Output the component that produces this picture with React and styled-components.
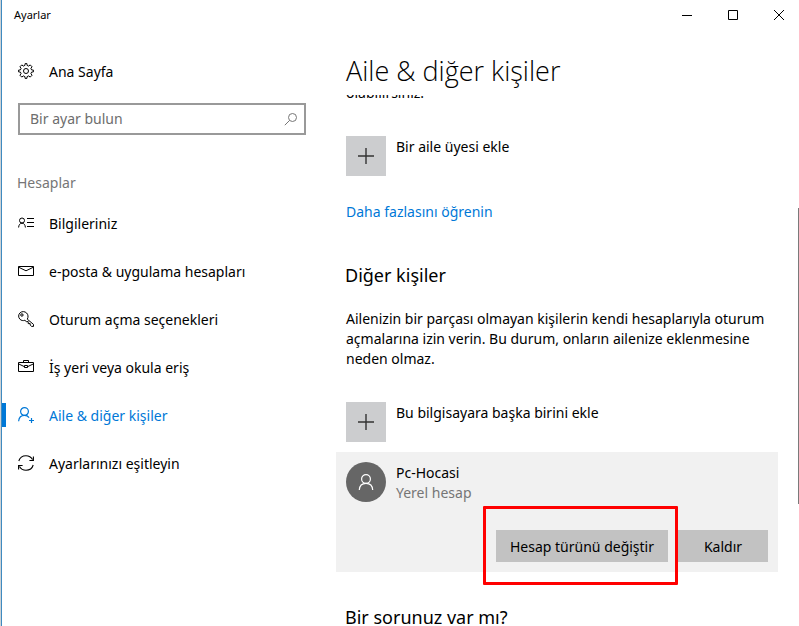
import React from "react";
import styled, { createGlobalStyle, css } from "styled-components";

const GlobalStyle = createGlobalStyle`
  * {
    box-sizing: border-box;
  }
  body {
    margin: 0;
    background: #cdd2d6;
    color: #000;
    font-family: "Noto Sans", "Open Sans", sans-serif;
    font-size: 14px;
    line-height: 20px;
  }
  button,
  input {
    font: inherit;
    color: inherit;
  }
  h1, h2, p {
    margin: 0;
    font-weight: 400;
  }
`;

const Desktop = styled.div`
  height: 100vh;
  padding-left: 1px;
  overflow: hidden;
`;

const Window = styled.div`
  display: flex;
  flex-direction: column;
  height: 100%;
  background: #fff;
  border-left: 1px solid #3f8ac0;
`;

const TitleBar = styled.header`
  display: flex;
  flex: none;
  justify-content: space-between;
  height: 30px;
  padding-left: 12px;
  font-size: 11px;
  line-height: 30px;
`;

const WindowButtons = styled.div`
  display: flex;
  margin-right: -3px;
`;

const WindowButton = styled.button`
  display: flex;
  align-items: center;
  justify-content: center;
  width: 46px;
  padding: 0;
  border: 0;
  background: none;
`;

const Body = styled.div`
  display: grid;
  grid-template-columns: 320px minmax(0, 1fr);
  flex: 1;
  min-height: 0;
`;

const Sidebar = styled.aside`
  padding-top: 17px;
`;

const NavItem = styled.a`
  display: flex;
  align-items: center;
  height: 48px;
  color: ${({ $active }) => ($active ? "#0078d7" : "#000")};
  text-decoration: none;

  &::before {
    content: "";
    width: 4px;
    height: 24px;
    margin-right: 12px;
    background: ${({ $active }) => ($active ? "#0078d7" : "transparent")};
  }
  svg {
    margin-right: 15px;
  }
`;

const NavLabel = styled.span`
  padding-top: 2px;
`;

const SearchBox = styled.label`
  display: flex;
  align-items: center;
  height: 32px;
  margin: 8px 16px 38px;
  padding: 0 6px 0 10px;
  border: 2px solid #999;
  color: #767676;
`;

const SearchInput = styled.input`
  flex: 1;
  min-width: 0;
  padding: 0;
  border: 0;
  outline: 0;
  background: none;

  &::placeholder {
    color: #6d6d6d;
    opacity: 1;
  }
`;

const GroupLabel = styled.h2`
  margin: 0 15px 6px;
  color: #767676;
  font-size: 14px;
`;

const Main = styled.main`
  display: flex;
  flex-direction: column;
  min-height: 0;
`;

const PageTitle = styled.h1`
  flex: none;
  padding: 21px 24px 4px;
  font-family: "Open Sans", "Noto Sans", sans-serif;
  font-size: 27px;
  font-weight: 300;
  line-height: 40px;
`;

const ScrollArea = styled.div`
  display: flex;
  flex: 1;
  min-height: 0;
`;

const Content = styled.div`
  flex: 1;
  min-width: 0;
  padding: 0 20px 0 14px;
  overflow: hidden;
`;

const ScrollTrack = styled.div`
  display: grid;
  grid-template-rows: 113fr 296fr 122fr;
  width: 1px;
`;

const ScrollThumb = styled.div`
  grid-row: 2;
  background: #7a7a7a;
`;

const Paragraph = styled.p`
  padding: 0 10px;
  ${({ $scrolled }) =>
    $scrolled &&
    css`
      margin-top: -12px;
    `}
`;

const AddButton = styled.button`
  display: flex;
  gap: 10px;
  margin: 33px 0 0;
  padding: 0 10px;
  border: 0;
  background: none;
  text-align: left;
`;

const PlusTile = styled.span`
  display: flex;
  align-items: center;
  justify-content: center;
  width: 40px;
  height: 40px;
  background: #cccdcf;
  color: #333;
`;

const TileText = styled.div`
  padding-top: 1px;
`;

const MoreLink = styled.a`
  display: block;
  margin: 26px 10px 0;
  color: #0078d7;
  text-decoration: none;
`;

const SectionTitle = styled.h2`
  margin: ${({ $top }) => $top}px 9px 20px;
  font-size: 18px;
  line-height: 28px;
`;

const AccountCard = styled.section`
  margin-top: 10px;
  padding: 10px;
  background: #f1f1f1;
`;

const AccountInfo = styled.div`
  display: flex;
  gap: 10px;
`;

const Avatar = styled.span`
  display: flex;
  align-items: center;
  justify-content: center;
  width: 40px;
  height: 40px;
  border-radius: 50%;
  background: #666;
  color: #fff;
`;

const AccountType = styled.p`
  color: #767676;
`;

const Actions = styled.div`
  display: flex;
  gap: 10px;
  justify-content: flex-end;
  margin-top: 27px;
`;

const ActionButton = styled.button`
  position: relative;
  width: ${({ $wide }) => ($wide ? 172 : 90)}px;
  height: 32px;
  padding: 2px 0 0;
  border: 0;
  background: #c2c2c2;
  white-space: nowrap;
`;

const Highlight = styled.span`
  position: absolute;
  inset: -24px -10px -23px -13px;
  border: 3px solid #f00;
  border-radius: 1px;
  pointer-events: none;
`;

const Icon = ({ size = 16, width = 1, children }) => (
  <svg
    width={size}
    height={size}
    viewBox={`0 0 ${size} ${size}`}
    fill="none"
    stroke="currentColor"
    strokeWidth={width}
    aria-hidden="true"
  >
    {children}
  </svg>
);

const GearIcon = () => (
  <Icon>
    <path d="M6.900 2.400 7.100.6h1.800l.2 1.800 1.600.7 1.500-1.200 1.900 1.900-1.200 1.500.7 1.600 1.800.2v1.800l-1.800.2-.7 1.600 1.200 1.500-1.900 1.900-1.500-1.200-1.600.7-.2 1.800H7.100l-.2-1.800-1.600-.7-1.500 1.200-1.900-1.900 1.200-1.500-.7-1.600L.6 8.900V7.100l1.800-.2.7-1.600-1.200-1.500 1.900-1.900 1.500 1.200z" />
    <circle cx="8" cy="8" r="2.500" />
  </Icon>
);

const SearchIcon = () => (
  <Icon size={14}>
    <circle cx="8.500" cy="5.500" r="4" />
    <path d="M5.600 8.400.8 13.200" />
  </Icon>
);

const ContactIcon = () => (
  <Icon>
    <circle cx="4" cy="5.500" r="2.500" />
    <path d="M.6 12.500C.8 9.800 2 8.200 4 8.200s3.200 1.600 3.400 4.300" />
    <path d="M9 3.500h7M9 7.500h7M9 11.500h7" />
  </Icon>
);

const MailIcon = () => (
  <Icon>
    <path d="M.5 3.500h15v9H.5z" />
    <path d="m.6 4.200 7.400 3.600 7.400-3.600" />
  </Icon>
);

const KeyIcon = () => (
  <Icon>
    <path d="M9.300 8.200c1.200-2.200.9-4.600-.7-6.200-1.700-1.700-4.700-1.900-6.500-.2-1.900 1.700-1.900 4.700-.2 6.400 1.400 1.400 3.200 1.700 5 1.100l1.400 1.300h1.900v2h2v1.500l1.400 1.300h1.900v-2z" />
    <circle cx="3.900" cy="4" r="1.200" />
  </Icon>
);

const BriefcaseIcon = () => (
  <Icon>
    <path d="M.5 3.500h15v9H.5zM5.500 3.500v-2h5v2" />
    <path d="m.8 5 5.700 2.700M15.200 5 9.500 7.700M6.500 6.500h3v2h-3z" />
  </Icon>
);

const PersonAddIcon = () => (
  <Icon width={1.2}>
    <circle cx="6.500" cy="4.500" r="3.900" />
    <path d="M.6 14.200C1 10.500 3.200 8.400 6.500 8.400c2 0 3.600.8 4.600 2.200" />
    <path d="M13.500 11v5M11 13.500h5" />
  </Icon>
);

const SyncIcon = () => (
  <Icon width={1.1}>
    <path d="M.8 6C1.700 2.900 4.500.7 8 .7c2.800 0 5.200 1.400 6.500 3.800M15.400 1.500v4h-4" />
    <path d="M15.200 10c-.9 3.100-3.700 5.300-7.200 5.300-2.800 0-5.200-1.400-6.500-3.800M.6 14.500v-4h4" />
  </Icon>
);

const PlusIcon = () => (
  <Icon width={1.4}>
    <path d="M8 0v16M0 8h16" />
  </Icon>
);

const PersonIcon = () => (
  <Icon width={1.2}>
    <circle cx="8" cy="5" r="4.400" />
    <path d="M1.300 16c.2-4 2.800-6.600 6.700-6.600s6.500 2.600 6.700 6.600" />
  </Icon>
);

const navItems = [
  { label: "Bilgileriniz", icon: ContactIcon },
  { label: "e-posta & uygulama hesapları", icon: MailIcon },
  { label: "Oturum açma seçenekleri", icon: KeyIcon },
  { label: "İş yeri veya okula eriş", icon: BriefcaseIcon },
  { label: "Aile & diğer kişiler", icon: PersonAddIcon, active: true },
  { label: "Ayarlarınızı eşitleyin", icon: SyncIcon }
];

const AddPerson = ({ children }) => (
  <AddButton type="button">
    <PlusTile>
      <PlusIcon />
    </PlusTile>
    <TileText as="span">{children}</TileText>
  </AddButton>
);

const App = () => (
  <Desktop lang="tr">
    <GlobalStyle />
    <Window>
      <TitleBar>
        Ayarlar
        <WindowButtons>
          <WindowButton type="button" aria-label="Simge durumuna küçült">
            <Icon size={10}>
              <path d="M0 5.500h10" />
            </Icon>
          </WindowButton>
          <WindowButton type="button" aria-label="Ekranı kapla">
            <Icon size={10}>
              <path d="M.5.500h9v9h-9z" />
            </Icon>
          </WindowButton>
          <WindowButton type="button" aria-label="Kapat">
            <Icon size={10}>
              <path d="m0 0 10 10M10 0 0 10" />
            </Icon>
          </WindowButton>
        </WindowButtons>
      </TitleBar>
      <Body>
        <Sidebar>
          <NavItem href="#home">
            <GearIcon />
            <NavLabel>Ana Sayfa</NavLabel>
          </NavItem>
          <SearchBox>
            <SearchInput
              type="text"
              placeholder="Bir ayar bulun"
              aria-label="Bir ayar bulun"
            />
            <SearchIcon />
          </SearchBox>
          <GroupLabel>Hesaplar</GroupLabel>
          <nav>
            {navItems.map(({ label, icon: ItemIcon, active }) => (
              <NavItem
                key={label}
                href="#"
                $active={active}
                aria-current={active ? "page" : undefined}
              >
                <ItemIcon />
                <NavLabel>{label}</NavLabel>
              </NavItem>
            ))}
          </nav>
        </Sidebar>
        <Main>
          <PageTitle>Aile & diğer kişiler</PageTitle>
          <ScrollArea>
            <Content>
              <Paragraph $scrolled>olabilirsiniz.</Paragraph>
              <AddPerson>Bir aile üyesi ekle</AddPerson>
              <MoreLink href="#more">Daha fazlasını öğrenin</MoreLink>
              <SectionTitle $top={39}>Diğer kişiler</SectionTitle>
              <Paragraph>
                Ailenizin bir parçası olmayan kişilerin kendi hesaplarıyla
                oturum açmalarına izin verin. Bu durum, onların ailenize
                eklenmesine neden olmaz.
              </Paragraph>
              <AddPerson>Bu bilgisayara başka birini ekle</AddPerson>
              <AccountCard>
                <AccountInfo>
                  <Avatar>
                    <PersonIcon />
                  </Avatar>
                  <TileText>
                    <p>Pc-Hocasi</p>
                    <AccountType>Yerel hesap</AccountType>
                  </TileText>
                </AccountInfo>
                <Actions>
                  <ActionButton type="button" $wide>
                    Hesap türünü değiştir
                    <Highlight />
                  </ActionButton>
                  <ActionButton type="button">Kaldır</ActionButton>
                </Actions>
              </AccountCard>
              <SectionTitle $top={31}>Bir sorunuz var mı?</SectionTitle>
            </Content>
            <ScrollTrack>
              <ScrollThumb />
            </ScrollTrack>
          </ScrollArea>
        </Main>
      </Body>
    </Window>
  </Desktop>
);

export default App;
